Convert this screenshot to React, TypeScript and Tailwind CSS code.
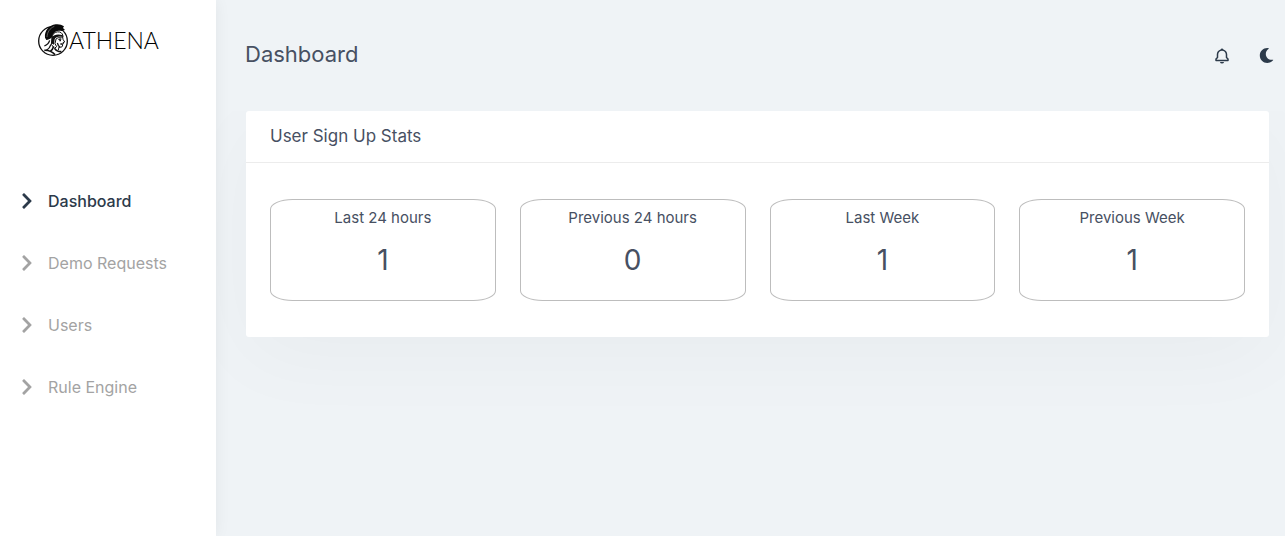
import React from 'react';
import { BiBell } from 'react-icons/bi';
import { FaChevronRight, FaMoon } from 'react-icons/fa';

interface NavItem {
    label: string;
    active?: boolean;
}

interface Stat {
    label: string;
    value: number;
}

const navItems: NavItem[] = [
    { label: 'Dashboard', active: true },
    { label: 'Demo Requests' },
    { label: 'Users' },
    { label: 'Rule Engine' },
];

const stats: Stat[] = [
    { label: 'Last 24 hours', value: 1 },
    { label: 'Previous 24 hours', value: 0 },
    { label: 'Last Week', value: 1 },
    { label: 'Previous Week', value: 1 },
];

const HelmetMark = () => (
    <svg viewBox="0 0 96 102" className="w-8 h-[34px] shrink-0" aria-hidden="true">
        <circle cx="48" cy="54" r="43" fill="#fff" stroke="#111" strokeWidth="4" />
        {/* crest */}
        <path d="M24 44C22 24 36 6 56 4c10-1 18 1 25 6l-3 5 6 6-10 3c-12-3-20 0-24 9-3 9-10 17-22 18z" fill="#0a0a0a" />
        <path d="M30 42c1-15 8-26 22-32" fill="none" stroke="#888" strokeWidth="2" />
        {/* helmet bowl and cheek guard */}
        <path d="M46 38c3-9 13-13 22-11 7 2 10 8 10 15l-13 1-8 5-3 14 5 9-7 5-9-12z" fill="#fff" stroke="#111" strokeWidth="3" />
        <path d="M44 42c8-8 20-10 34-5l-1 5c-12-3-20 0-24 7l-2 16-8-4z" fill="#111" />
        {/* face */}
        <path d="M77 42l1 7 5 8-5 2 1 4-3 2 1 4c-2 4-7 4-11 3l-2 9" fill="none" stroke="#111" strokeWidth="3" />
        <path d="M64 49l9-1M67 53l5 0M70 63l7 0M61 60l3 7 5 6" fill="none" stroke="#111" strokeWidth="4" />
        {/* neck and shoulders */}
        <path d="M38 52c-3 10-8 14-16 17M42 64c-3 10-8 15-15 19" fill="none" stroke="#111" strokeWidth="4" />
        <path d="M22 82c12-1 22 3 32 13M53 76c4 7 10 10 20 10M50 70c-2 8-6 12-11 16" fill="none" stroke="#111" strokeWidth="5" />
    </svg>
);

const Sidebar = () => (
    <aside className="relative z-20 w-54 shrink-0 bg-white shadow-[0_0_15px_rgba(0,0,0,0.06)]">
        <a href="#" className="flex h-20 items-center pl-[37px] text-black">
            <HelmetMark />
            <span className="font-['Lato',sans-serif] text-[23px] font-light">ATHENA</span>
        </a>
        <nav className="mt-[91px]">
            <ul>
                {navItems.map((item) => (
                    <li key={item.label} className="mb-[2px]">
                        <a
                            href="#"
                            aria-current={item.active ? 'page' : undefined}
                            className={`flex h-15 items-center gap-3 pl-[18px] text-base ${item.active ? 'font-medium text-[#2c3a4a]' : 'text-[#a3a3a3]'}`}
                        >
                            <FaChevronRight size={18} />
                            {item.label}
                        </a>
                    </li>
                ))}
            </ul>
        </nav>
    </aside>
);

const Header = () => (
    <header className="relative z-10 flex h-[111px] items-center justify-between bg-[#eff3f6] pl-[29px] pr-[11px]">
        <h1 className="pb-1 text-[22px] leading-8">Dashboard</h1>
        <div className="flex items-center gap-7 text-[#2c3a4a]">
            <button type="button" aria-label="Notifications">
                <BiBell size={18} />
            </button>
            <button type="button" aria-label="Toggle dark mode">
                <FaMoon size={15} />
            </button>
        </div>
    </header>
);

const StatCard = ({ label, value }: Stat) => (
    <div className="flex h-[102px] flex-col items-center gap-3 rounded-[10%] border border-[#bdbdbd] pt-2">
        <div className="text-[15px] leading-5">{label}</div>
        <div className="text-[28px] leading-10">{value}</div>
    </div>
);

const App = () => {
    return (
        <div className="flex min-h-screen overflow-hidden bg-[#eff3f6] font-['Inter',sans-serif] text-[#475062]">
            <Sidebar />
            <div className="min-w-0 flex-1">
                <Header />
                <main className="pl-[30px] pr-4">
                    <section className="rounded-[3px] bg-white shadow-[0_20px_85px_rgba(0,0,0,0.03)]">
                        <h2 className="border-b border-[#ececec] px-6 py-3 text-[17px] leading-[27px]">User Sign Up Stats</h2>
                        <div className="grid grid-cols-4 gap-6 px-6 py-9">
                            {stats.map((stat) => (
                                <StatCard key={stat.label} {...stat} />
                            ))}
                        </div>
                    </section>
                </main>
            </div>
        </div>
    );
};

export default App;
